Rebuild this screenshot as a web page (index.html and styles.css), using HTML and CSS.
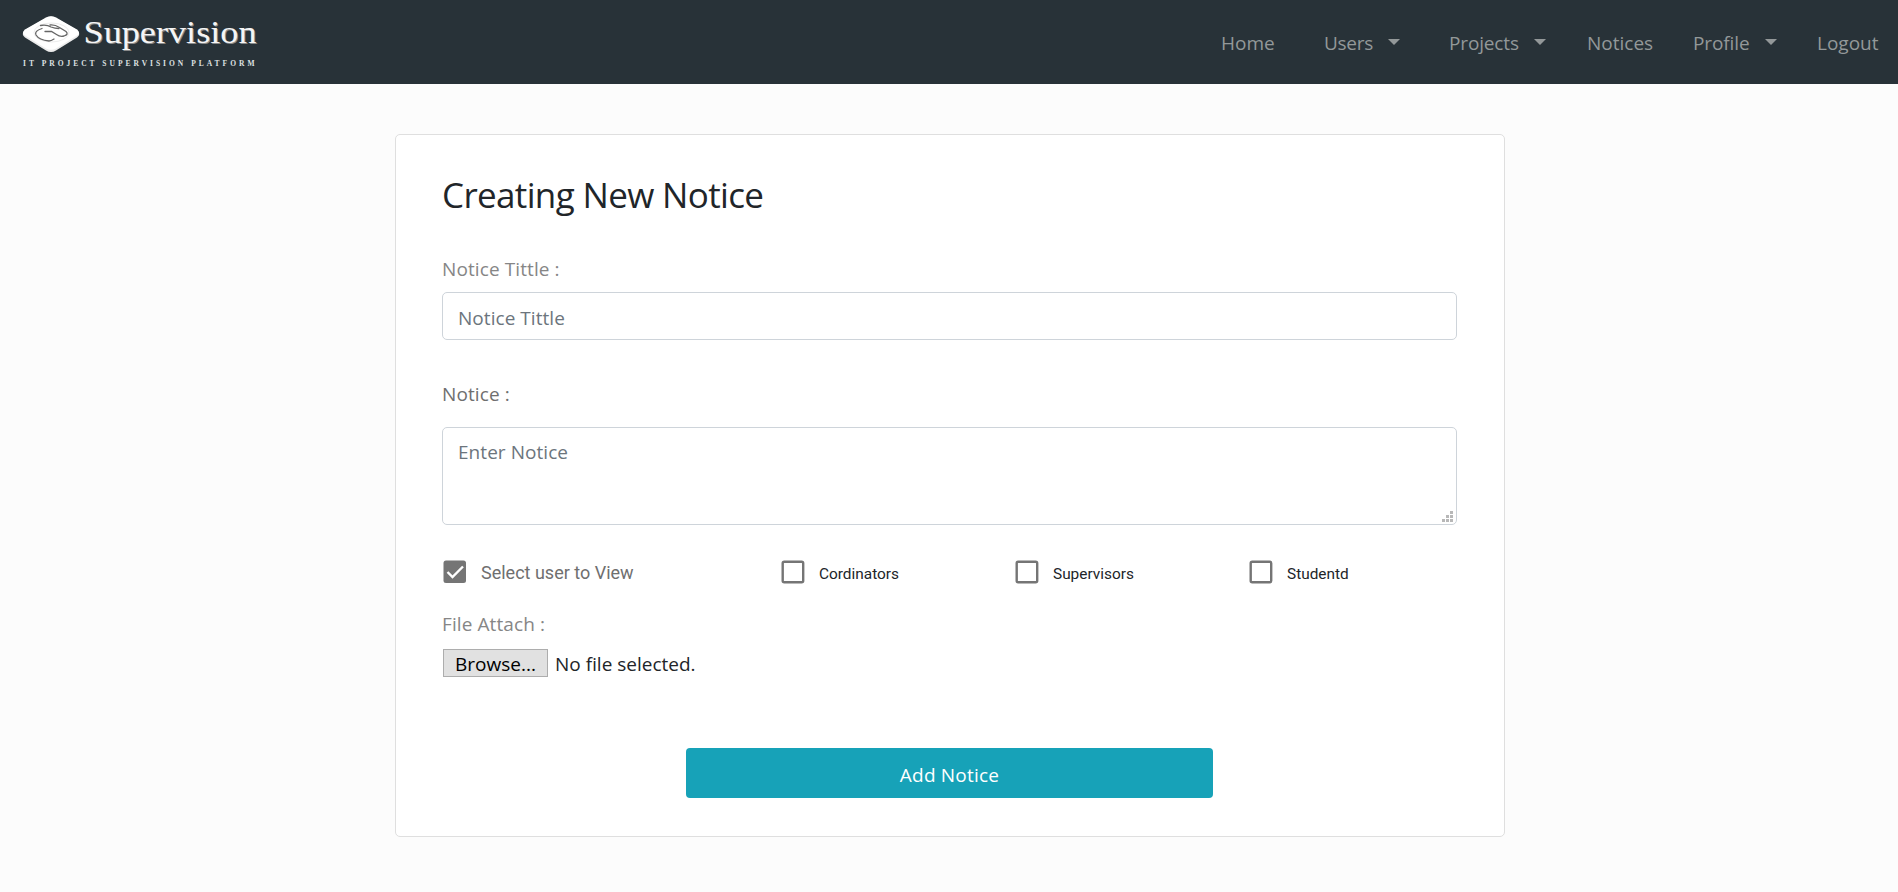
FILE: index.html
```html
<!DOCTYPE html>
<html lang="en">
<head>
<meta charset="utf-8">
<title>Supervision - Create Notice</title>
<link rel="stylesheet" href="styles.css">
</head>
<body>
<header class="navbar">
  <a class="brand">
    <svg width="240" height="56" viewBox="20 12 240 56">
      <path d="M46 18Q51 15 56 18L77 30Q81.500 34 77 37.500L56 50.500Q51 53.500 46 50.500L25 37.500Q20.500 34 25 30Z" fill="#ececec"/>
      <path d="M46 17.500Q51 14.800 56 17.500L77 29.500Q81 33 77 35.500L56 48.500Q51 51 46 48.500L25 35.500Q21 33 25 29.500Z" fill="#fff"/>
      <ellipse cx="51.500" cy="32.500" rx="17.500" ry="9.500" fill="none" stroke="#ededed" stroke-width="1"/>
      <g fill="none" stroke="#666" stroke-width="1.300" stroke-linecap="round">
        <path d="M40.500 25.500Q47 24.500 51 27Q55 28.500 59 28.500"/>
        <path d="M50 25Q55 24.500 59.500 27.500L66 31.500Q69 34.500 64 36Q60 37 56.500 34.500L51.500 31.500L45 31.500"/>
        <path d="M42 28.500Q34 31 36 35Q39 40 49 41Q51 41 54 39"/>
      </g>
      <text class="brand-shadow" x="84.500" y="44" textLength="173" lengthAdjust="spacingAndGlyphs">Supervision</text>
      <text class="brand-name" x="83.500" y="43" textLength="173" lengthAdjust="spacingAndGlyphs">Supervision</text>
      <text class="brand-sub" x="23" y="65.500" textLength="231.500">IT PROJECT SUPERVISION PLATFORM</text>
    </svg>
  </a>
  <nav class="links">
    <a class="w-home">Home</a>
    <a class="w-users">Users<i class="caret"></i></a>
    <a class="w-projects">Projects<i class="caret"></i></a>
    <a class="w-notices">Notices</a>
    <a class="w-profile">Profile<i class="caret"></i></a>
    <a class="w-logout">Logout</a>
  </nav>
</header>
<main class="card">
  <h1>Creating New Notice</h1>
  <label class="label">Notice Tittle :</label>
  <div class="field">Notice Tittle</div>
  <label class="label dark">Notice :</label>
  <div class="field area">Enter Notice
    <svg class="grip" width="11" height="11" fill="#b8b8b8"><path d="M8 0h3v3h-3zM4 4h3v3h-3zM8 4h3v3h-3zM0 8h3v3h-3zM4 8h3v3h-3zM8 8h3v3h-3z"/></svg>
  </div>
  <div class="checks">
    <label class="check main"><svg class="box" width="24" height="24" viewBox="0 0 24 24"><rect x=".5" y=".5" width="22.500" height="22.500" rx="2.500" fill="#757575"/><path d="M4.500 12L9.500 17L20 6.500" fill="none" stroke="#fff" stroke-width="2.400"/></svg>Select user to View</label>
    <label class="check"><svg class="box" width="24" height="24" viewBox="0 0 24 24"><rect class="outline" x="1.700" y="1.700" width="20.500" height="20.500" rx="1.500"/></svg>Cordinators</label>
    <label class="check"><svg class="box" width="24" height="24" viewBox="0 0 24 24"><rect class="outline" x="1.700" y="1.700" width="20.500" height="20.500" rx="1.500"/></svg>Supervisors</label>
    <label class="check"><svg class="box" width="24" height="24" viewBox="0 0 24 24"><rect class="outline" x="1.700" y="1.700" width="20.500" height="20.500" rx="1.500"/></svg>Studentd</label>
  </div>
  <label class="label file-label">File Attach :</label>
  <div class="file"><span class="browse">Browse...</span><span class="none">No file selected.</span></div>
  <div class="submit">Add Notice</div>
</main>
</body>
</html>
```
FILE: styles.css
```css
* { box-sizing: border-box; }
body { margin: 0; min-height: 892px; background: #fcfcfc; font: 19px/30px "Open Sans", sans-serif; color: #212529; }
.navbar { height: 84px; background: #283238; display: flex; justify-content: space-between; }
.brand { padding: 12px 0 0 20px; }
.brand svg { display: block; }
.brand-name, .brand-shadow { font: 32px "Liberation Serif", serif; }
.brand-name { fill: #f5f5f5; }
.brand-shadow { fill: #8a8a8a; }
.brand-sub { font: bold 7.5px "Liberation Serif", serif; fill: #dfe1e2; }
.links { display: flex; padding-top: 28px; color: #939899; white-space: nowrap; }
.links a { display: block; }
.w-home { width: 103px; }
.w-users { width: 125px; letter-spacing: -0.3px; }
.w-projects { width: 138px; letter-spacing: -0.15px; }
.w-notices { width: 106px; }
.w-profile { width: 124px; letter-spacing: -0.1px; }
.w-logout { width: 81px; }
.caret { display: inline-block; margin-left: 15px; vertical-align: 5px; border: 6px solid transparent; border-top-color: #939899; border-bottom: 0; }
.card { width: 1110px; height: 703px; margin: 50px 0 0 395px; padding: 39px 47px 0 46px; background: #fff; border: 1px solid #dfdfdf; border-radius: 5px; }
h1 { margin: 0 0 38px; font-size: 35px; line-height: 42px; font-weight: 400; letter-spacing: -0.65px; }
.label { display: block; color: #868686; margin-bottom: 8px; letter-spacing: 0.1px; }
.dark { color: #6f6f6f; margin: 39px 0 18px; }
.field { height: 48px; border: 1px solid #ced4da; border-radius: 5px; padding: 10px 15px; color: #6c757d; letter-spacing: 0.05px; }
.area { height: 98px; padding-top: 9px; position: relative; }
.grip { position: absolute; right: 3px; bottom: 2px; }
.checks { display: flex; margin: 35px 0 25px; height: 24px; padding-left: 1px; }
.check { display: flex; flex: none; width: 234px; gap: 14px; font: 15.4px/28px Roboto, sans-serif; }
.check:last-child { width: auto; }
.main { width: 338px; font-size: 18px; line-height: 26px; color: #6f6f6f; }
.box { display: block; flex: none; }
.outline { fill: none; stroke: #757575; stroke-width: 2.4; }
.file-label { margin-bottom: 10px; }
.file { display: flex; gap: 7px; padding-left: 1px; height: 28px; line-height: 30px; }
.browse { width: 105px; height: 28px; border: 1px solid #adadad; background: #e1e1e1; text-align: center; color: #000; line-height: 28px; }
.submit { width: 527px; height: 50px; margin: 71px auto 0; border-radius: 4px; background: #17a2b8; color: #fff; text-align: center; line-height: 54px; letter-spacing: 0.2px; }
```
